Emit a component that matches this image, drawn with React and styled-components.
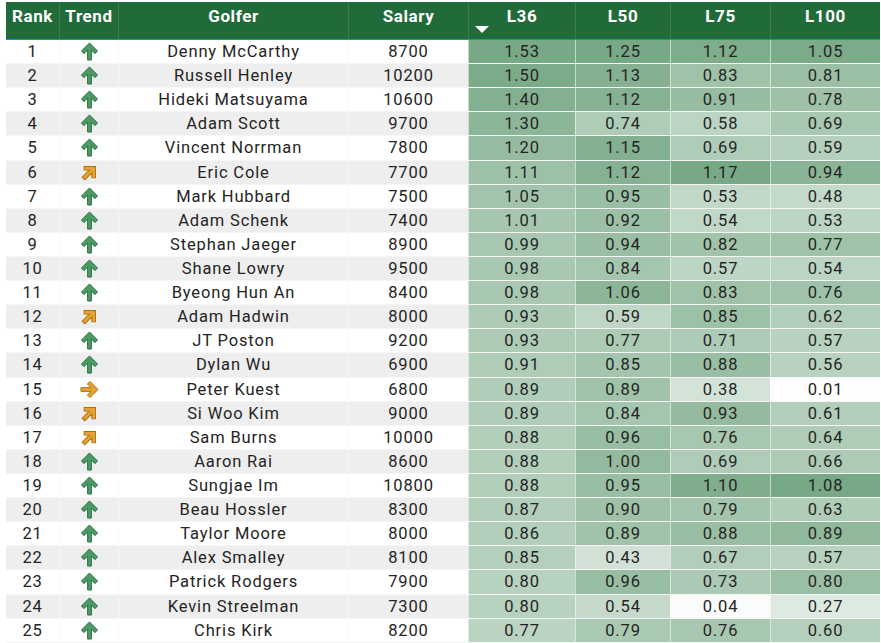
import React from "react"
import styled, { createGlobalStyle } from "styled-components"

const GlobalStyle = createGlobalStyle`
  body {
    margin: 0;
    background: #ffffff;
    font-family: Roboto, "Liberation Sans", sans-serif;
  }
`

const columns = "53px 59px 230px 120px 107px 95px 100px 110px"

const rows = [
  [1, "up", "Denny McCarthy", 8700, 1.53, 1.25, 1.12, 1.05],
  [2, "up", "Russell Henley", 10200, 1.5, 1.13, 0.83, 0.81],
  [3, "up", "Hideki Matsuyama", 10600, 1.4, 1.12, 0.91, 0.78],
  [4, "up", "Adam Scott", 9700, 1.3, 0.74, 0.58, 0.69],
  [5, "up", "Vincent Norrman", 7800, 1.2, 1.15, 0.69, 0.59],
  [6, "diag", "Eric Cole", 7700, 1.11, 1.12, 1.17, 0.94],
  [7, "up", "Mark Hubbard", 7500, 1.05, 0.95, 0.53, 0.48],
  [8, "up", "Adam Schenk", 7400, 1.01, 0.92, 0.54, 0.53],
  [9, "up", "Stephan Jaeger", 8900, 0.99, 0.94, 0.82, 0.77],
  [10, "up", "Shane Lowry", 9500, 0.98, 0.84, 0.57, 0.54],
  [11, "up", "Byeong Hun An", 8400, 0.98, 1.06, 0.83, 0.76],
  [12, "diag", "Adam Hadwin", 8000, 0.93, 0.59, 0.85, 0.62],
  [13, "up", "JT Poston", 9200, 0.93, 0.77, 0.71, 0.57],
  [14, "up", "Dylan Wu", 6900, 0.91, 0.85, 0.88, 0.56],
  [15, "right", "Peter Kuest", 6800, 0.89, 0.89, 0.38, 0.01],
  [16, "diag", "Si Woo Kim", 9000, 0.89, 0.84, 0.93, 0.61],
  [17, "diag", "Sam Burns", 10000, 0.88, 0.96, 0.76, 0.64],
  [18, "up", "Aaron Rai", 8600, 0.88, 1.0, 0.69, 0.66],
  [19, "up", "Sungjae Im", 10800, 0.88, 0.95, 1.1, 1.08],
  [20, "up", "Beau Hossler", 8300, 0.87, 0.9, 0.79, 0.63],
  [21, "up", "Taylor Moore", 8000, 0.86, 0.89, 0.88, 0.89],
  [22, "up", "Alex Smalley", 8100, 0.85, 0.43, 0.67, 0.57],
  [23, "up", "Patrick Rodgers", 7900, 0.8, 0.96, 0.73, 0.8],
  [24, "up", "Kevin Streelman", 7300, 0.8, 0.54, 0.04, 0.27],
  [25, "up", "Chris Kirk", 8200, 0.77, 0.79, 0.76, 0.6],
]

const colMax = [4, 5, 6, 7].map(i => Math.max(...rows.map(r => r[i])))

// white -> green, scaled by value / column max
const heat = (v, max) => {
  const t = v / max
  const mix = (a, b) => Math.round(a + (b - a) * t)
  return `rgb(${mix(255, 120)}, ${mix(255, 169)}, ${mix(255, 134)})`
}

const Table = styled.div`
  padding: 2px 0 0 6px;
  width: 874px;
`

const HeaderRow = styled.div`
  display: grid;
  grid-template-columns: ${columns};
  height: 37px;
  background: #216b3a;
  border-bottom: 1px solid #2b88d8;
`

const HeaderCell = styled.div`
  position: relative;
  display: flex;
  justify-content: center;
  padding-top: 4px;
  color: #ffffff;
  font-weight: 700;
  font-size: 17px;
  letter-spacing: 0.6px;
  border-left: 1px solid #3a7e50;
  &:first-child {
    border-left: none;
  }
`

const SortMark = styled.span`
  position: absolute;
  left: 6px;
  bottom: 6px;
  width: 0;
  height: 0;
  border-left: 7px solid transparent;
  border-right: 7px solid transparent;
  border-top: 7px solid #ffffff;
`

const Row = styled.div`
  display: grid;
  grid-template-columns: ${columns};
  height: 24.12px;
  background: ${p => (p.$alt ? "#eeeeee" : "#ffffff")};
  box-sizing: border-box;
  border-bottom: 1px solid #f6f6f6;
`

const Cell = styled.div`
  display: flex;
  align-items: center;
  justify-content: center;
  color: #252423;
  font-size: 16.5px;
  letter-spacing: 0.85px;
  border-left: 1px solid #f8f8f8;
  &:first-child {
    border-left: none;
  }
`

const HeatCell = styled(Cell)`
  border-left: 1px solid rgba(255, 255, 255, 0.55);
`

const Arrow = ({ dir }) => {
  const rotate = dir === "up" ? 0 : dir === "diag" ? 45 : 90
  const up = dir === "up"
  return (
    <svg width="19" height="19" viewBox="0 0 16 16">
      <polygon
        points="8,0.8 14.8,7.6 12.6,9.8 9.6,6.8 9.6,15.2 6.4,15.2 6.4,6.8 3.4,9.8 1.2,7.6"
        fill={up ? "#4c9a63" : "#e3a233"}
        stroke={up ? "#2a6b3e" : "#b0700f"}
        strokeWidth="0.8"
        strokeLinejoin="miter"
        transform={`rotate(${rotate} 8 8)`}
      />
    </svg>
  )
}

const headers = ["Rank", "Trend", "Golfer", "Salary", "L36", "L50", "L75", "L100"]

const App = () => (
  <>
    <GlobalStyle />
    <Table>
      <HeaderRow>
        {headers.map(h => (
          <HeaderCell key={h}>
            {h}
            {h === "L36" && <SortMark />}
          </HeaderCell>
        ))}
      </HeaderRow>
      {rows.map((r, i) => (
        <Row key={r[0]} $alt={i % 2 === 1}>
          <Cell>{r[0]}</Cell>
          <Cell>
            <Arrow dir={r[1]} />
          </Cell>
          <Cell>{r[2]}</Cell>
          <Cell>{r[3]}</Cell>
          {[4, 5, 6, 7].map((c, k) => (
            <HeatCell key={c} style={{ background: heat(r[c], colMax[k]) }}>
              {r[c].toFixed(2)}
            </HeatCell>
          ))}
        </Row>
      ))}
    </Table>
  </>
)

export default App
